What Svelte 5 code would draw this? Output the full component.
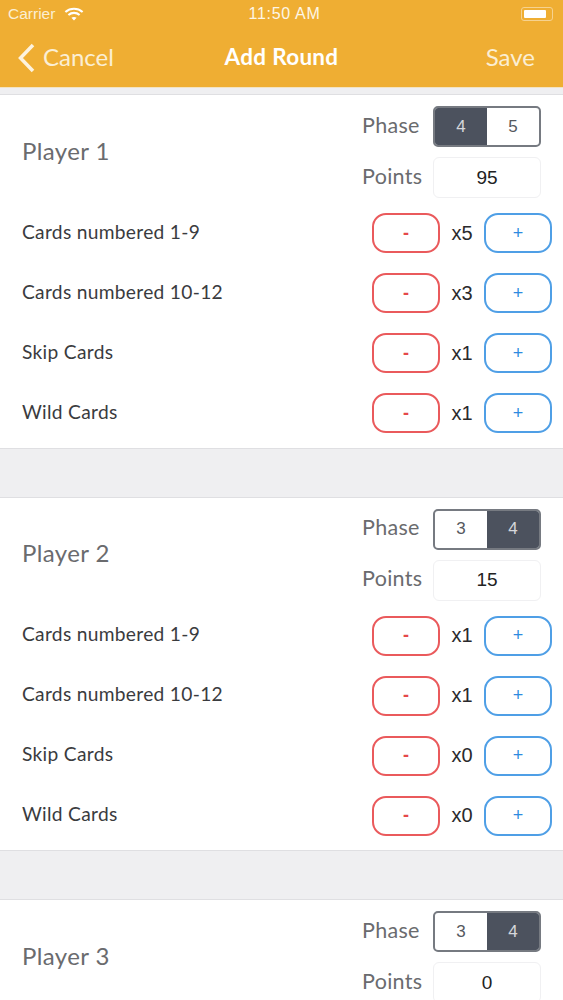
<script>
  const labels = ['Cards numbered 1-9', 'Cards numbered 10-12', 'Skip Cards', 'Wild Cards'];
  const players = [
    { name: 'Player 1', phases: ['4', '5'], active: 0, points: '95', counts: [5, 3, 1, 1] },
    { name: 'Player 2', phases: ['3', '4'], active: 1, points: '15', counts: [1, 1, 0, 0] },
    { name: 'Player 3', phases: ['3', '4'], active: 1, points: '0', counts: [] }
  ];
</script>

<div class="screen">
  <header class="top">
    <div class="status">
      <div class="carrier">
        <span>Carrier</span>
        <svg width="20" height="14" viewBox="0 0 18 13" aria-hidden="true">
          <path d="M1 4.6C5.6.6 12.4.6 17 4.6" fill="none" stroke="#fff" stroke-width="2" />
          <path d="M3.8 7.4c3-2.5 7.4-2.5 10.4 0" fill="none" stroke="#fff" stroke-width="2" />
          <path d="M6.6 10c1.4-1.1 3.4-1.1 4.8 0L9 12.6z" fill="#fff" />
        </svg>
      </div>
      <div class="time">11:50 AM</div>
      <div class="battery"><span class="fill"></span></div>
    </div>
    <nav class="navbar">
      <div class="cancel">
        <svg width="18" height="30" viewBox="0 0 18 30" aria-hidden="true">
          <path d="M16 2 3.5 15 16 28" fill="none" stroke="#fdf3df" stroke-width="3.5" />
        </svg>
        <span class="navtext">Cancel</span>
      </div>
      <div class="title navtext">Add Round</div>
      <div class="save navtext">Save</div>
    </nav>
  </header>

  <main class="list">
    {#each players as p}
      <section class="card">
        <div class="head">
          <div class="name">{p.name}</div>
          <div class="fields">
            <div class="field">
              <span class="flabel">Phase</span>
              <div class="seg">
                {#each p.phases as ph, i}
                  <div class="segitem" class:on={i === p.active}>{ph}</div>
                {/each}
              </div>
            </div>
            <div class="field">
              <span class="flabel">Points</span>
              <div class="input">{p.points}</div>
            </div>
          </div>
        </div>
        <div class="rows">
          {#each p.counts as count, i}
            <div class="row">
              <span class="rlabel">{labels[i]}</span>
              <button class="btn minus">-</button>
              <span class="count">x{count}</span>
              <button class="btn plus">+</button>
            </div>
          {/each}
        </div>
      </section>
    {/each}
  </main>
</div>

<style>
  :global(body) {
    margin: 0;
    background: #efeff1;
  }
  .screen {
    width: 563px;
    height: 1000px;
    overflow: hidden;
    background: #efeff1;
    font-family: Lato, "Open Sans", sans-serif;
  }
  .top {
    height: 87px;
    background: #efae33;
    color: #fff;
    border-bottom: 1px solid #f3e3c2;
  }
  .status {
    height: 28px;
    padding: 0 10px 0 8px;
    display: grid;
    grid-template-columns: 1fr auto 1fr;
    align-items: center;
    font-family: "Liberation Sans", sans-serif;
    font-size: 15.5px;
  }
  .carrier {
    display: flex;
    align-items: center;
    gap: 9px;
    color: #fbeed3;
  }
  .time {
    margin-left: 8px;
    font-size: 16px;
    letter-spacing: 0.7px;
    color: #fdf6e6;
  }
  .battery {
    justify-self: end;
    width: 32px;
    height: 14px;
    box-sizing: border-box;
    border: 1px solid #f6d28f;
    border-radius: 3px;
    padding: 2px;
  }
  .fill {
    display: block;
    width: 22px;
    height: 8px;
    background: #fff;
    border-radius: 1px;
  }
  .navbar {
    height: 59px;
    display: grid;
    grid-template-columns: 1fr auto 1fr;
    align-items: center;
    padding: 0 17px;
    font-size: 24px;
    box-sizing: border-box;
  }
  .navtext {
    padding-bottom: 2px;
  }
  .cancel {
    display: flex;
    align-items: center;
    gap: 8px;
    color: #fbeed3;
  }
  .title {
    font-weight: 700;
    font-size: 22.5px;
    letter-spacing: 0.3px;
  }
  .save {
    justify-self: end;
    margin-right: 11px;
    color: #fbeed3;
  }
  .list {
    padding-top: 6px;
    display: flex;
    flex-direction: column;
    gap: 48px;
  }
  .card {
    background: #fff;
    border-top: 1px solid #dfdfe2;
    border-bottom: 1px solid #dfdfe2;
    box-sizing: border-box;
    height: 354.7px;
    padding: 11px 11px 0 22px;
  }
  .head {
    display: flex;
    justify-content: space-between;
    align-items: center;
    padding-right: 11px;
  }
  .name {
    font-size: 24px;
    color: #6a6b6e;
    letter-spacing: 0.4px;
    padding-bottom: 4px;
  }
  .fields {
    display: flex;
    flex-direction: column;
    gap: 10px;
  }
  .field {
    display: flex;
    align-items: center;
    gap: 15px;
  }
  .flabel {
    width: 56px;
    font-size: 21.5px;
    color: #6a6b6e;
    letter-spacing: 0.3px;
    padding-bottom: 4px;
  }
  .seg {
    width: 108px;
    height: 41px;
    box-sizing: border-box;
    border: 2px solid #767a81;
    border-radius: 5px;
    display: flex;
    overflow: hidden;
  }
  .segitem {
    flex: 1;
    display: flex;
    align-items: center;
    justify-content: center;
    font-family: "Liberation Sans", sans-serif;
    font-size: 17px;
    color: #55585e;
  }
  .segitem.on {
    background: #4c525e;
    color: #d5d7db;
  }
  .input {
    width: 108px;
    height: 41px;
    box-sizing: border-box;
    border: 1px solid #f0f0f2;
    border-radius: 6px;
    display: flex;
    align-items: center;
    justify-content: center;
    font-family: "Liberation Sans", sans-serif;
    font-size: 19px;
    color: #222;
  }
  .rows {
    margin-top: 15px;
    display: flex;
    flex-direction: column;
    gap: 20px;
  }
  .row {
    height: 40px;
    display: flex;
    align-items: center;
  }
  .rlabel {
    flex: 1;
    font-size: 19.2px;
    color: #3a3b3e;
    letter-spacing: 0.3px;
    padding-bottom: 4px;
  }
  .btn {
    width: 68px;
    height: 40px;
    box-sizing: border-box;
    background: #fff;
    border-radius: 14px;
    border: 2px solid;
    padding: 0;
    font-family: "Liberation Sans", sans-serif;
    font-size: 18px;
  }
  .minus {
    border-color: #ea5a5c;
    color: #e5484a;
    font-weight: 700;
  }
  .plus {
    border-color: #4f9fe6;
    color: #2f8ae0;
  }
  .count {
    width: 44px;
    text-align: center;
    font-family: "Liberation Sans", sans-serif;
    font-size: 20px;
    color: #2a2a2c;
  }
</style>
